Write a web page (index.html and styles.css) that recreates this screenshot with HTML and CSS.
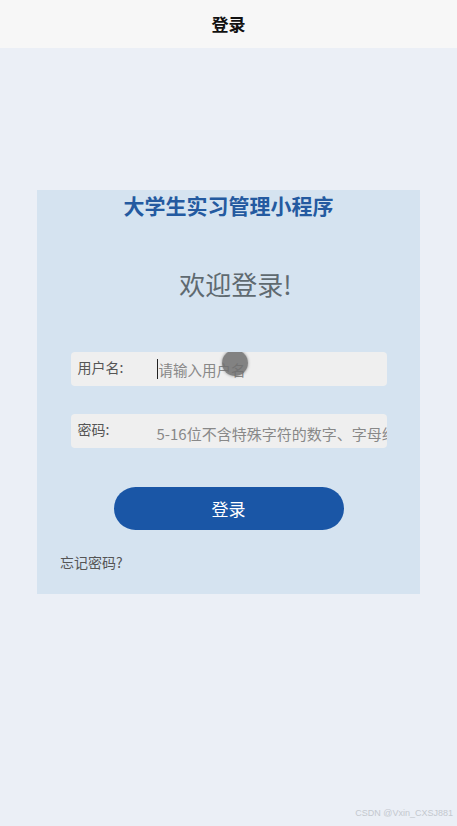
FILE: index.html
```html
<!DOCTYPE html>
<html lang="zh">
<head>
    <meta charset="UTF-8">
    <meta name="viewport" content="width=device-width, initial-scale=1.0">
    <title>登录</title>
    <link rel="stylesheet" href="styles.css">
</head>
<body>
<div class="nav-bar">登录</div>

<div class="page">
    <div class="card">
        <div class="app-title">大学生实习管理小程序</div>
        <div class="welcome">欢迎登录!</div>

        <div class="field">
            <span class="field-label">用户名:</span>
            <span class="caret"></span>
            <span class="placeholder">请输入用户名</span>
            <span class="touch-dot"></span>
        </div>

        <div class="field field-pwd">
            <span class="field-label">密码:</span>
            <span class="placeholder">5-16位不含特殊字符的数字、字母组合</span>
        </div>

        <div class="login-btn">登录</div>

        <div class="forgot">忘记密码?</div>
    </div>
</div>

<div class="watermark">CSDN @Vxin_CXSJ881</div>
</body>
</html>
```

FILE: styles.css
```css
* {
    box-sizing: border-box;
}

html, body {
    margin: 0;
    padding: 0;
}

body {
    width: 457px;
    height: 826px;
    background-color: #ebeff6;
    font-family: "Noto Sans CJK SC", "Noto Sans", sans-serif;
    position: relative;
    overflow: hidden;
}

.nav-bar {
    height: 48px;
    background-color: #f7f7f7;
    text-align: center;
    line-height: 48px;
    font-size: 17px;
    font-weight: bold;
    color: #111;
}

.page {
    padding: 142px 37px 0 37px;
}

.card {
    width: 383px;
    height: 404px;
    background-color: #d5e3f0;
    padding-top: 1px;
    display: flex;
    flex-direction: column;
    align-items: center;
}

.app-title {
    font-size: 21px;
    font-weight: bold;
    color: #245aa0;
    line-height: 28px;
}

.welcome {
    margin-top: 47px;
    padding-left: 14px;
    font-size: 26px;
    color: #5f6a70;
    line-height: 36px;
}

.field {
    margin-top: 50px;
    width: 316px;
    height: 34px;
    background-color: #efefef;
    border-radius: 4px;
    display: flex;
    align-items: center;
    padding-left: 7px;
    font-size: 14px;
    position: relative;
    overflow: hidden;
    white-space: nowrap;
}

.field-pwd {
    margin-top: 28px;
}

.field-label {
    width: 79px;
    flex-shrink: 0;
    color: #555;
    position: relative;
    top: -2px;
}

.placeholder {
    color: #888;
    font-size: 14.5px;
}

.field-pwd .placeholder {
    position: relative;
    top: 2px;
    font-size: 15px;
}

.caret {
    width: 1px;
    height: 20px;
    background-color: #222;
    margin-right: 1px;
}

.touch-dot {
    position: absolute;
    left: 151px;
    top: -2px;
    width: 26px;
    height: 26px;
    border-radius: 50%;
    background-color: rgba(110, 110, 110, 0.85);
    box-shadow: 0 0 3px rgba(80, 80, 80, 0.6);
}

.login-btn {
    margin-top: 39px;
    width: 230px;
    height: 43px;
    border-radius: 22px;
    background-color: #1a56a6;
    color: #fff;
    font-size: 17px;
    text-align: center;
    line-height: 43px;
}

.forgot {
    align-self: flex-start;
    margin-left: 23px;
    margin-top: 22px;
    font-size: 14px;
    color: #555;
}

.watermark {
    position: absolute;
    right: 4px;
    bottom: 8px;
    font-family: "Liberation Sans", sans-serif;
    font-size: 9px;
    color: #c4c8ce;
}
```
